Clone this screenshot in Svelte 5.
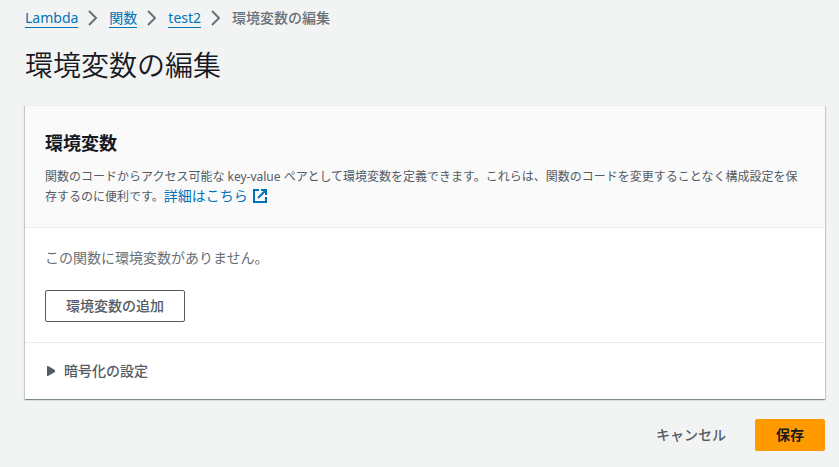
<script>
  const crumbs = [
    { text: 'Lambda', href: '#lambda' },
    { text: '関数', href: '#functions' },
    { text: 'test2', href: '#test2' }
  ];
  const variables = $state([]);
</script>

<main>
  <nav aria-label="breadcrumb">
    <ol>
      {#each crumbs as crumb}
        <li>
          <a href={crumb.href}>{crumb.text}</a>
          <svg class="chevron" viewBox="0 0 16 16" aria-hidden="true"><path d="M4 1l7 7-7 7" /></svg>
        </li>
      {/each}
      <li class="current" aria-current="page">環境変数の編集</li>
    </ol>
  </nav>

  <h1>環境変数の編集</h1>

  <form onsubmit={(e) => e.preventDefault()}>
    <section class="panel">
      <header>
        <h2>環境変数</h2>
        <p>
          関数のコードからアクセス可能な key-value ペアとして環境変数を定義できます。これらは、関数のコードを変更することなく構成設定を保存するのに便利です。<a href="#details">詳細はこちら<svg class="external" viewBox="0 0 16 16" aria-hidden="true"><path d="M9 2h5v5M6 10l8-8M14 9v5H2V2h5" /></svg></a>
        </p>
      </header>
      <div class="content">
        {#if variables.length === 0}
          <p>この関数に環境変数がありません。</p>
        {/if}
        <button type="button" class="normal">環境変数の追加</button>
      </div>
      <details>
        <summary>
          <svg class="caret" viewBox="0 0 8 10" aria-hidden="true"><path d="M0 0h1l7 4v2l-7 4H0z" /></svg>
          暗号化の設定
        </summary>
      </details>
    </section>

    <div class="actions">
      <button type="button" class="link">キャンセル</button>
      <button type="submit" class="primary">保存</button>
    </div>
  </form>
</main>

<style>
  :global(body) {
    background: #f2f3f3;
  }
  main {
    padding: 8px 14px 16px 25px;
    font: 14px/20px 'Noto Sans', 'Noto Sans CJK JP', sans-serif;
    color: #545b64;
  }
  h1, h2, p, ol {
    margin: 0;
    padding: 0;
  }
  a {
    color: #0073bb;
    text-decoration: none;
  }
  ol {
    display: flex;
    list-style: none;
  }
  li {
    display: flex;
    align-items: center;
  }
  li a {
    line-height: 18px;
    border-bottom: 1px solid #0073bb;
  }
  .current {
    color: #687078;
    font-weight: 500;
  }
  .chevron {
    width: 16px;
    height: 16px;
    margin: 0 8px 0 7px;
    fill: none;
    stroke: #687078;
    stroke-width: 2;
  }
  h1 {
    margin-top: 19px;
    font-size: 28px;
    line-height: 36px;
    font-weight: 350;
    color: #16191f;
  }
  .panel {
    margin-top: 22px;
    background: #fff;
    border-top: 1px solid #eaeded;
    box-shadow: 0 1px 1px 0 rgba(0, 28, 36, 0.3), 1px 1px 1px 0 rgba(0, 28, 36, 0.15), -1px 1px 1px 0 rgba(0, 28, 36, 0.15);
  }
  header {
    padding: 25px 20px 20px;
    background: #fafafa;
    border-bottom: 1px solid #eaeded;
  }
  h2 {
    font-size: 18px;
    line-height: 24px;
    font-weight: 700;
    color: #16191f;
  }
  header p {
    margin-top: 12px;
    font-size: 12px;
  }
  header a {
    display: inline-block;
    font-size: 14px;
    line-height: 18px;
  }
  .external {
    width: 16px;
    height: 16px;
    margin-left: 4px;
    vertical-align: -3px;
    fill: none;
    stroke: #0073bb;
    stroke-width: 2;
  }
  .content {
    padding: 20px;
    color: #687078;
  }
  button {
    box-sizing: border-box;
    height: 32px;
    padding: 0 20px;
    border: 1px solid transparent;
    border-radius: 2px;
    background: transparent;
    color: #545b64;
    font: inherit;
    font-weight: 500;
    cursor: pointer;
  }
  .normal {
    display: block;
    margin-top: 22px;
    border-color: #545b64;
    background: #fff;
  }
  details {
    border-top: 1px solid #eaeded;
  }
  summary {
    display: flex;
    align-items: center;
    gap: 9px;
    padding: 18px 22px;
    font-weight: 500;
    list-style: none;
    cursor: pointer;
  }
  .caret {
    width: 8px;
    height: 10px;
    fill: #545b64;
  }
  .actions {
    display: flex;
    justify-content: flex-end;
    gap: 8px;
    margin-top: 20px;
  }
  .primary {
    border-color: #ff9900;
    background: #ff9900;
    color: #16191f;
    font-weight: 700;
  }
</style>
